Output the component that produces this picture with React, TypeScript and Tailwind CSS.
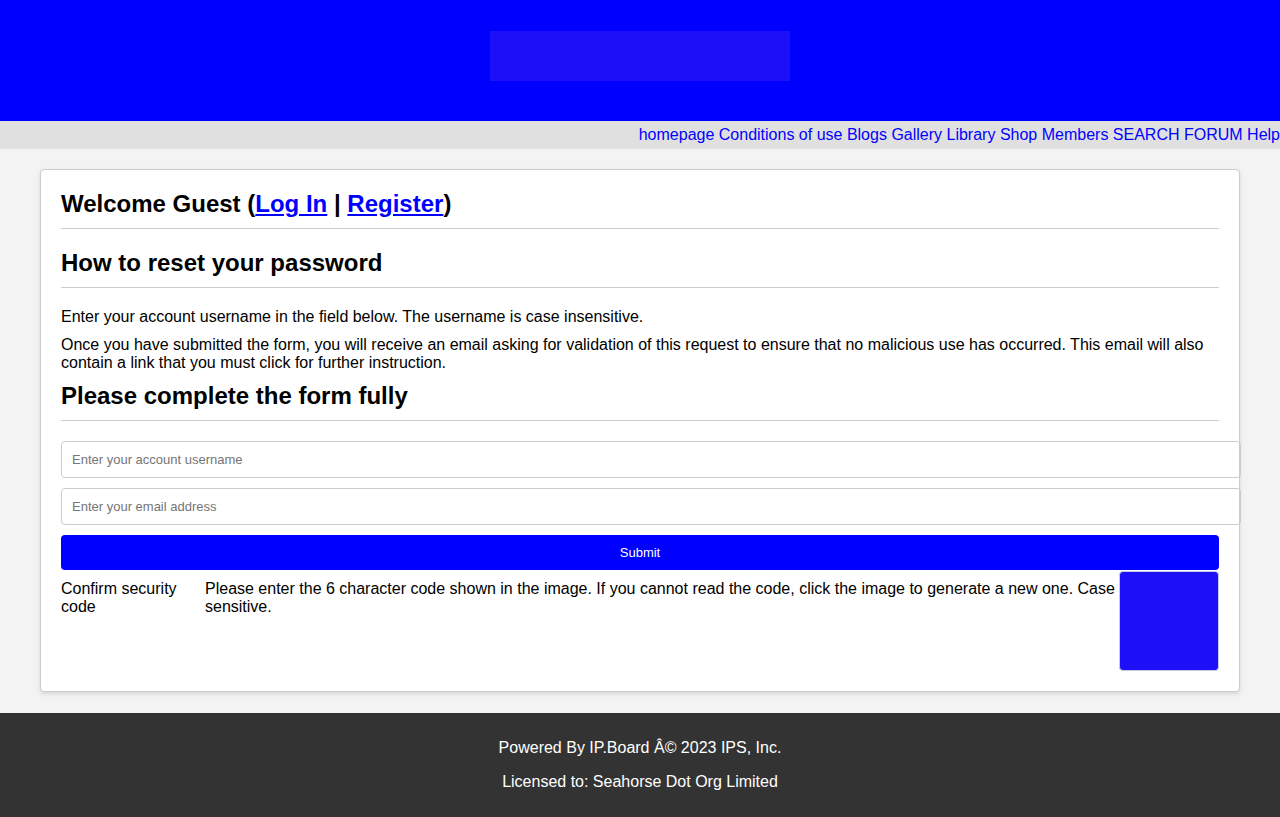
import React from "react";

export default function App() {
  const font = { fontFamily: '"Liberation Sans", Arial, sans-serif' };
  const links = ["homepage", "Conditions of use", "Blogs", "Gallery", "Library", "Shop", "Members", "SEARCH", "FORUM", "Help"];
  return (
    <div className="min-h-[817px] bg-[#f3f3f3] text-black flex flex-col" style={font}>
      <header className="h-[121px] bg-[#0000ff] flex items-start justify-center pt-[31px]">
        <div className="w-[300px] h-[50px] bg-[#1d0ff8]" />
      </header>
      <nav className="h-[28px] bg-[#e0e0e0] text-right text-[16px] leading-[28px] text-[#0000ff] whitespace-nowrap">
        {links.map((t, i) => (
          <React.Fragment key={t}>
            <a href="#" className="text-[#0000ff]">
              {t}
            </a>
            {i < links.length - 1 ? " " : ""}
          </React.Fragment>
        ))}
      </nav>
      <main className="px-[40px] pt-[20px] pb-[20px] flex-1">
        <div className="bg-white border border-[#cccccc] rounded-[4px] shadow-[0_2px_4px_rgba(0,0,0,0.12)] p-[20px]">
          <h1 className="text-[24px] leading-[28px] font-bold pb-[10px] border-b border-[#cccccc] mb-[20px]">
            Welcome Guest (
            <a href="#" className="text-[#0000ff] underline">Log In</a> |{" "}
            <a href="#" className="text-[#0000ff] underline">Register</a>)
          </h1>
          <h2 className="text-[24px] leading-[28px] font-bold pb-[10px] border-b border-[#cccccc] mb-[20px]">
            How to reset your password
          </h2>
          <p className="text-[16px] leading-[18px] mb-[10px]">
            Enter your account username in the field below. The username is case insensitive.
          </p>
          <p className="text-[16px] leading-[18px] mb-[10px]">
            Once you have submitted the form, you will receive an email asking for validation of this request to ensure that no malicious use has occurred. This email will also contain a link that you must click for further instruction.
          </p>
          <h2 className="text-[24px] leading-[28px] font-bold pb-[10px] border-b border-[#cccccc] mb-[20px]">
            Please complete the form fully
          </h2>
          <input
            type="text"
            placeholder="Enter your account username"
            className="block box-content w-full h-[15px] px-[10px] py-[10px] border border-[#cccccc] rounded-[4px] text-[13px] leading-[15px] placeholder:text-[#757575] mb-[10px] outline-none"
            style={font}
          />
          <input
            type="text"
            placeholder="Enter your email address"
            className="block box-content w-full h-[15px] px-[10px] py-[10px] border border-[#cccccc] rounded-[4px] text-[13px] leading-[15px] placeholder:text-[#757575] mb-[10px] outline-none"
            style={font}
          />
          <button
            className="block w-full h-[35px] bg-[#0000ff] text-white text-[13px] rounded-[4px]"
            style={font}
          >
            Submit
          </button>
          <div className="flex items-start pt-[1px] text-[16px] leading-[18px]">
            <div className="w-[144px] shrink-0 pt-[9px]">Confirm security code</div>
            <div className="flex-1 pt-[9px]">
              Please enter the 6 character code shown in the image. If you cannot read the code, click the image to generate a new one. Case sensitive.
            </div>
            <div className="w-[100px] h-[100px] shrink-0 bg-[#1d0ff8] rounded-[4px] border border-[#c8c8e8]" />
          </div>
        </div>
      </main>
      <footer className="h-[104px] bg-[#333333] text-white text-center text-[16px] leading-[18px] pt-[26px]">
        <p className="mb-[16px]">Powered By IP.Board Â© 2023 IPS, Inc.</p>
        <p>Licensed to: Seahorse Dot Org Limited</p>
      </footer>
    </div>
  );
}
